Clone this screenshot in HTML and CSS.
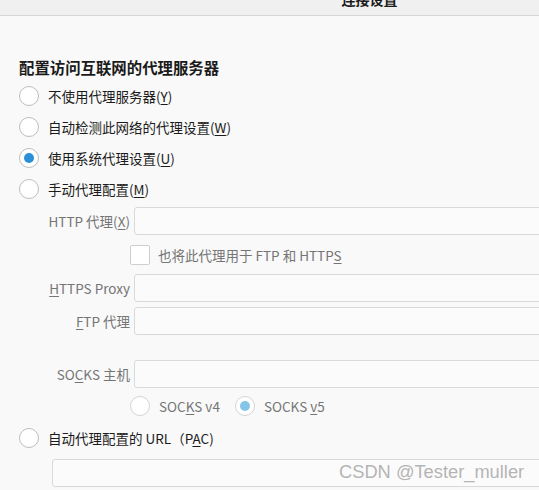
FILE: index.html
```html
<!DOCTYPE html>
<html lang="zh-CN">
<head>
    <meta charset="UTF-8">
    <meta name="viewport" content="width=device-width, initial-scale=1.0">
    <title>连接设置</title>
    <link rel="stylesheet" href="styles.css">
</head>
<body>

<header class="dialog-head">
    <span class="dialog-title">连接设置</span>
</header>

<main class="dialog-body">
    <h2 class="group-title">配置访问互联网的代理服务器</h2>

    <div class="radio-row"><span class="radio"></span><span>不使用代理服务器(<u>Y</u>)</span></div>
    <div class="radio-row"><span class="radio"></span><span>自动检测此网络的代理设置(<u>W</u>)</span></div>
    <div class="radio-row"><span class="radio checked"></span><span>使用系统代理设置(<u>U</u>)</span></div>
    <div class="radio-row"><span class="radio"></span><span>手动代理配置(<u>M</u>)</span></div>

    <div class="manual">
        <div class="field-row">
            <label class="field-label">HTTP 代理(<u>X</u>)</label>
            <div class="input-field"></div>
        </div>
        <div class="check-row">
            <span class="checkbox"></span><span>也将此代理用于 FTP 和 HTTP<u>S</u></span>
        </div>
        <div class="field-row">
            <label class="field-label"><u>H</u>TTPS Proxy</label>
            <div class="input-field"></div>
        </div>
        <div class="field-row ftp-row">
            <label class="field-label"><u>F</u>TP 代理</label>
            <div class="input-field"></div>
        </div>
        <div class="field-row socks-row">
            <label class="field-label">SO<u>C</u>KS 主机</label>
            <div class="input-field"></div>
        </div>
        <div class="socks-versions">
            <span class="option"><span class="radio"></span><span>SOC<u>K</u>S v4</span></span>
            <span class="option"><span class="radio checked disabled"></span><span>SOCKS <u>v</u>5</span></span>
        </div>
    </div>

    <div class="radio-row pac-row"><span class="radio"></span><span>自动代理配置的 URL（P<u>A</u>C)</span></div>
    <div class="input-field pac-input"></div>
</main>

<div class="watermark">CSDN @Tester_muller</div>

</body>
</html>
```

FILE: styles.css
```css
:root {
    --text-color: #1b1b1b;
    --muted-color: #757575;
    --border-color: #d9d9d9;
    --accent-color: #2a8fd6;
    --font-family: "Noto Sans CJK SC", "Noto Sans", sans-serif;
}
body {
    margin: 0;
    padding: 0;
    width: 539px;
    height: 490px;
    overflow: hidden;
    font-family: var(--font-family);
    font-size: 13.5px;
    color: var(--text-color);
    background-color: #f9f9f9;
    position: relative;
}
u {
    text-underline-offset: 2px;
}
.dialog-head {
    height: 15px;
    overflow: hidden;
    background-color: #f0f0f0;
    border-bottom: 1px solid #d6d6d6;
    display: flex;
    justify-content: center;
    padding-left: 200px;
}
.dialog-title {
    font-size: 14px;
    font-weight: bold;
    line-height: 20px;
    margin-top: -11px;
}
.dialog-body {
    padding-left: 19px;
    width: 540px;
}
.group-title {
    font-size: 15.4px;
    font-weight: bold;
    line-height: 20px;
    margin: 41px 0 4px 0;
}
.radio-row {
    height: 30.8px;
    display: flex;
    align-items: center;
}
.radio {
    width: 20px;
    height: 20px;
    box-sizing: border-box;
    border: 1px solid #bdbdbd;
    border-radius: 50%;
    background-color: #fff;
    display: inline-flex;
    align-items: center;
    justify-content: center;
    margin-right: 9px;
    flex-shrink: 0;
}
.radio.checked::after {
    content: "";
    width: 10px;
    height: 10px;
    border-radius: 50%;
    background-color: var(--accent-color);
}
.radio.disabled {
    border-color: #d4d4d4;
}
.radio.disabled::after {
    background-color: #86c4ea;
}
.manual {
    color: var(--muted-color);
    margin-top: 3px;
}
.field-row {
    display: flex;
    align-items: center;
    height: 28px;
}
.field-label {
    width: 111px;
    text-align: right;
    padding-right: 4px;
    flex-shrink: 0;
}
.input-field {
    flex: 1;
    height: 28px;
    box-sizing: border-box;
    border: 1px solid var(--border-color);
    border-radius: 3px;
    background-color: #fbfbfb;
}
.check-row {
    height: 39px;
    display: flex;
    align-items: center;
    padding-left: 111px;
}
.checkbox {
    width: 20px;
    height: 20px;
    box-sizing: border-box;
    border: 1px solid #cfcfcf;
    border-radius: 2px;
    background-color: #fff;
    margin-right: 8px;
}
.ftp-row {
    margin-top: 5px;
}
.socks-row {
    margin-top: 25px;
}
.socks-versions {
    height: 35px;
    display: flex;
    align-items: center;
    padding-left: 111px;
    gap: 15px;
}
.option {
    display: flex;
    align-items: center;
}
.option .radio {
    border-color: #d4d4d4;
}
.pac-row {
    height: 30px;
}
.pac-input {
    margin: 6px 0 0 33px;
    width: 500px;
    flex: none;
}
.watermark {
    position: absolute;
    left: 339px;
    top: 461px;
    font-family: "Liberation Sans", Arial, sans-serif;
    font-size: 18.3px;
    color: #b4b4b4;
    text-shadow: 0 0 1px #fff;
}
```
